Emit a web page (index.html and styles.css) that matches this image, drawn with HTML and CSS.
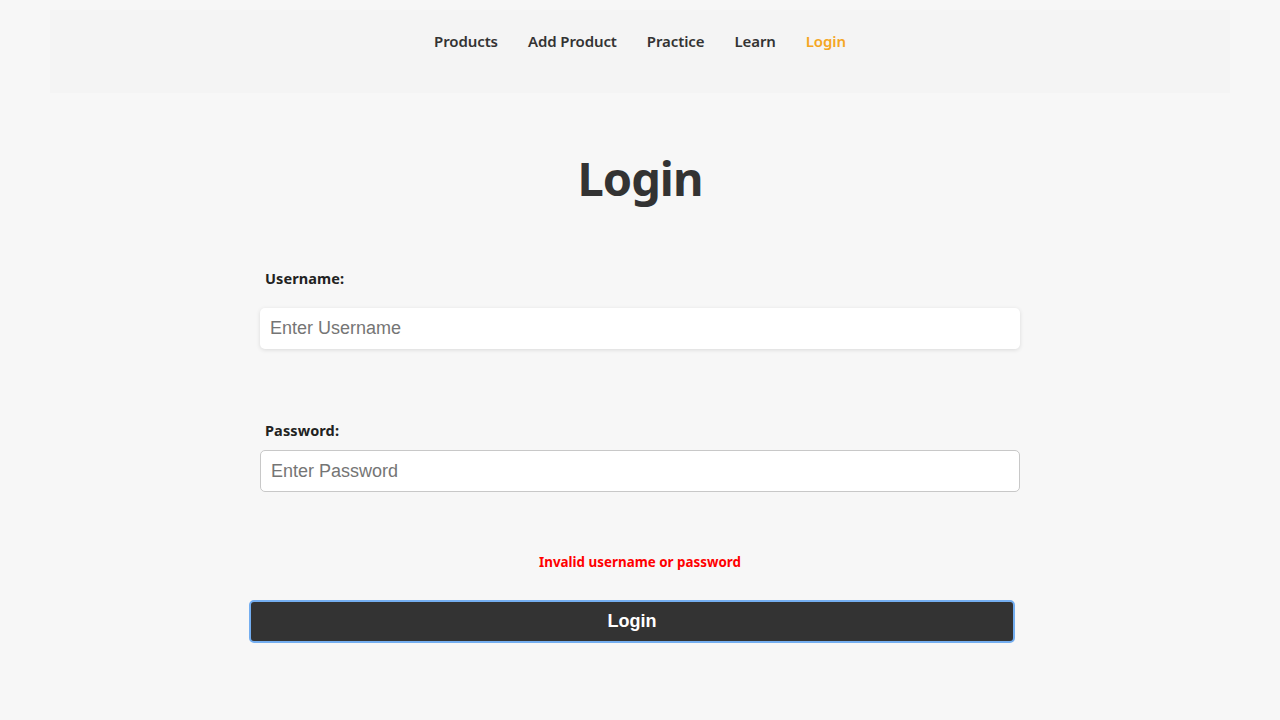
FILE: index.html
```html
<!DOCTYPE html>
<html lang="en">
<head>
<meta charset="utf-8">
<title>Login</title>
<link rel="stylesheet" href="styles.css">
</head>
<body>
<div class="page">
  <header class="header">
    <nav class="nav">
      <a class="nav-link" href="#">Products</a>
      <a class="nav-link" href="#">Add Product</a>
      <a class="nav-link" href="#">Practice</a>
      <a class="nav-link" href="#">Learn</a>
      <a class="nav-link active" href="#">Login</a>
    </nav>
  </header>
  <main class="main">
    <h1 class="title">Login</h1>
    <form class="form">
      <label class="label label-user" for="u">Username:</label>
      <input class="input input-user" id="u" type="text" placeholder="Enter Username">
      <label class="label label-pass" for="p">Password:</label>
      <input class="input input-pass" id="p" type="password" placeholder="Enter Password">
      <p class="error">Invalid username or password</p>
      <button class="btn" type="button">Login</button>
    </form>
  </main>
</div>
</body>
</html>
```

FILE: styles.css
```css
* { box-sizing: border-box; }
html, body { margin: 0; padding: 0; }
body {
  background: #f7f7f7;
  font-family: "Noto Sans", "Open Sans", sans-serif;
  color: #333;
}
.page {
  padding: 10px 50px 0;
}
.header {
  background: #f4f4f4;
  height: 83px;
  padding-top: 20px;
}
.nav {
  display: flex;
  justify-content: center;
  gap: 30px;
}
.nav-link {
  font-size: 15px;
  line-height: 22px;
  font-weight: 600;
  color: #333;
  text-decoration: none;
  letter-spacing: -0.1px;
}
.nav-link.active { color: #f5a623; }
.main {
  display: flex;
  flex-direction: column;
  align-items: center;
}
.title {
  margin: 56px 0 0;
  font-size: 47px;
  line-height: 58px;
  font-weight: 700;
  color: #333;
  letter-spacing: -1px;
}
.form {
  width: 760px;
  display: flex;
  flex-direction: column;
  margin-top: 61px;
}
.label {
  font-size: 14.5px;
  line-height: 20px;
  font-weight: 700;
  color: #222;
  padding-left: 5px;
  letter-spacing: 0.1px;
}
.label-pass { margin-top: 71px; }
.input {
  width: 100%;
  font-family: "Liberation Sans", Arial, sans-serif;
  font-size: 18px;
  color: #333;
  background: #fff;
  border-radius: 5px;
  outline: none;
}
.input::placeholder { color: #757575; }
.input-user {
  margin-top: 20px;
  height: 41px;
  border: none;
  padding: 0 10px;
  box-shadow: 0 1px 4px rgba(0,0,0,0.12);
}
.input-pass {
  margin-top: 10px;
  height: 42px;
  border: 1px solid #c8c8c8;
  padding: 0 10px;
}
.error {
  margin: 61px 0 0;
  text-align: center;
  color: #f00;
  font-size: 13.4px;
  line-height: 18px;
  font-weight: 700;
}
.btn {
  margin-top: 29px;
  margin-left: -11px;
  width: 766px;
  height: 43px;
  background: #333;
  color: #fff;
  border: 2px solid #74aef0;
  border-radius: 5px;
  font-family: "Liberation Sans", Arial, sans-serif;
  font-size: 18px;
  font-weight: 700;
}
```
